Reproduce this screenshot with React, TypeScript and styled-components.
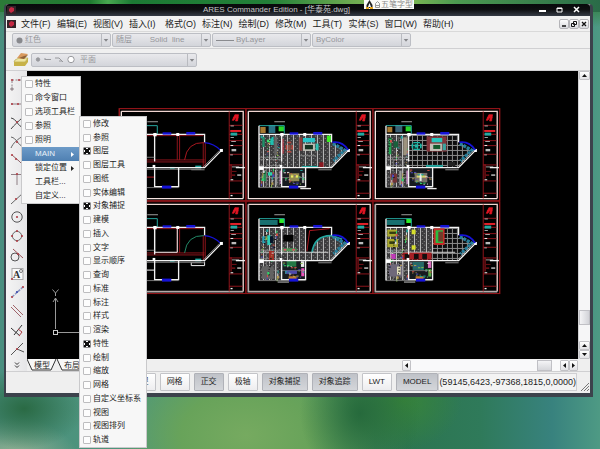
import React from "react";
import styled, { createGlobalStyle, css } from "styled-components";

const GlobalStyle = createGlobalStyle`
  * { box-sizing: border-box; }
  body {
    margin: 0;
    font-family: "Liberation Sans", "Noto Sans CJK SC", sans-serif;
    font-size: 9px;
    line-height: 12px;
    color: #1c1c1c;
  }
  button, select, input { font: inherit; color: inherit; margin: 0; }
`;

const Desktop = styled.main`
  position: relative;
  display: flex;
  min-height: 100vh;
  padding: 4px 7px 52px 4px;
  overflow: hidden;
  border-bottom: 1px solid #77807a;
  background:
    radial-gradient(ellipse 60px 40px at 4% 91%, #2a6a44 0%, transparent 100%),
    radial-gradient(ellipse 70px 50px at 2% 104%, #a3b896 0%, transparent 100%),
    radial-gradient(ellipse 60px 70px at 60% 92%, #266a3c 0%, transparent 100%),
    radial-gradient(ellipse 60px 50px at 67% 89%, #38853a 0%, transparent 100%),
    radial-gradient(ellipse 130px 90px at 41% 97%, #76aa60 0%, #68a35a 50%, transparent 100%),
    linear-gradient(180deg, #2f7a38 0%, transparent 6%),
    linear-gradient(90deg, #4a8f80 0%, #4f977a 25%, #5a9f60 50%, #2c7550 68%, #2f7a5a 80%, #38827e 92%, #4e9a84 100%);
`;

const TopGlow = styled.div`
  position: absolute;
  inset: 0 0 auto 0;
  height: 12px;
  background: linear-gradient(90deg, #2c7a38 0%, #1f7a30 15%, #48a850 18%, #1c7a34 22%, #238038 45%, #6aa850 58%, #8abf55 66%, #4c9a50 76%, #2a6b48 100%);
`;

const Window = styled.section`
  position: relative;
  flex: 1;
  min-width: 0;
  display: flex;
  flex-direction: column;
  border: solid #3c424c;
  border-width: 0 3px 4px 2px;
  border-radius: 4px 4px 0 0;
  background: #efefef;
`;

const TitleBar = styled.header`
  display: grid;
  grid-template-columns: 60px 1fr 60px;
  align-items: center;
  height: 12px;
  padding-left: 1px;
  border-radius: 3px 3px 0 0;
  background: linear-gradient(#08090b 0%, #0d0e10 45%, #353b45 100%);
`;

const Title = styled.h1`
  margin: 0;
  padding-right: 44px;
  font-size: 8px;
  font-weight: normal;
  line-height: 12px;
  text-align: center;
  white-space: nowrap;
  color: #c6c8cb;
`;

const WindowButtons = styled.div`
  display: flex;
  justify-content: flex-end;
  gap: 6px;
  padding-right: 8px;
`;

const CaptionButton = styled.button`
  display: flex;
  width: 11px;
  height: 10px;
  padding: 1px;
  border: 0;
  background: none;
  color: #fff;
`;

const MenuBar = styled.nav`
  display: flex;
  align-items: center;
  height: 16px;
  padding: 0 1px 0 1px;
  border-bottom: 1px solid #d9d9d9;
  background: #f1f1f1;
`;

const MenuList = styled.div`
  display: flex;
  gap: 6px;
  flex: 1;
  padding-left: 5px;
`;

const MenuButton = styled.button`
  padding: 0;
  border: 0;
  background: none;
  font-size: 9px;
  line-height: 14px;
  min-width: 30px;
  text-align: left;
  white-space: nowrap;
`;

const MdiButtons = styled.div`
  display: flex;
`;

const MdiButton = styled.button`
  display: flex;
  width: 10px;
  height: 10px;
  padding: 1px;
  border: 1px solid #b4b4b8;
  border-radius: 2px;
  background: linear-gradient(#fdfdfd, #d9dade);
`;

const Toolbar = styled.div<{ $tall?: boolean }>`
  display: flex;
  align-items: center;
  gap: 1px;
  height: ${(p) => (p.$tall ? 22 : 17)}px;
  padding-left: 6px;
  border-bottom: 1px solid #d0d0d2;
  background: #f0f0f0;
`;

const Combo = styled.label<{ $wide?: boolean }>`
  position: relative;
  display: flex;
  align-items: center;
  flex: 0 1 ${(p) => (p.$wide ? 166 : 99)}px;
  height: 14px;
  padding-left: 3px;
  gap: 2px;
  border: 1px solid #bcbec4;
  border-radius: 2px;
  background: linear-gradient(#e9e9ec, #d3d5da);
  color: #96979b;
`;

const ComboSelect = styled.select`
  appearance: none;
  flex: 1;
  min-width: 0;
  height: 12px;
  padding: 0;
  border: 0;
  background: none;
  font-size: 8px;
  line-height: 12px;
  color: #96979b;
`;

const ComboArrow = styled.svg`
  align-self: stretch;
  flex: none;
  width: 9px;
  height: 12px;
  border-left: 1px solid #b9bbc0;
  pointer-events: none;
`;

const Workspace = styled.div`
  flex: 1;
  min-height: 0;
  display: flex;
`;

const ToolPalette = styled.aside`
  display: flex;
  flex-direction: column;
  justify-content: space-between;
  align-items: center;
  width: 21px;
  padding: 7px 0 0 0;
  background: linear-gradient(90deg, #f4f4f4, #e6e6e8);
`;

const ToolButton = styled.button`
  display: flex;
  padding: 0;
  border: 0;
  background: none;
`;

const DrawingColumn = styled.div`
  flex: 1;
  min-width: 0;
  display: flex;
  flex-direction: column;
`;

const DrawingRow = styled.div`
  flex: 1;
  min-height: 0;
  display: flex;
`;

const Canvas = styled.div`
  flex: 1;
  min-width: 0;
  overflow: hidden;
  background: #000;
`;

const CanvasDrawing = styled.svg`
  display: block;
  width: 100%;
  height: 100%;
`;

const ScrollV = styled.div`
  display: flex;
  flex-direction: column;
  width: 12px;
  background: #f6f6f7;
  border-left: 1px solid #d2d2d4;
`;

const ScrollButton = styled.button`
  display: flex;
  align-items: center;
  justify-content: center;
  flex: none;
  width: 9px;
  height: 11px;
  padding: 0;
  border: 1px solid #c2c2c6;
  border-radius: 1px;
  background: linear-gradient(#fff, #e2e2e5);
  ${ScrollV} & { width: 11px; height: 9px; }
`;

const ThumbV = styled.div`
  height: 15px;
  margin: auto 0 16px;
  border: 1px solid #c0c0c5;
  background: linear-gradient(90deg, #f4f4f6, #d2d3d8);
`;

const TabRow = styled.div`
  display: flex;
  align-items: center;
  height: 12px;
  padding-right: 12px;
  background: #efefef;
`;

const SheetTab = styled.button`
  position: relative;
  width: 30px;
  height: 12px;
  padding: 0;
  border: 0;
  background: none;
  font-size: 8px;
  line-height: 11px;
`;

const TabShape = styled.svg`
  position: absolute;
  inset: 0;
  width: 100%;
  height: 100%;
  z-index: 0;
`;

const TabLabel = styled.span`
  position: relative;
`;

const ScrollH = styled.div`
  display: flex;
  width: 176px;
  margin-left: auto;
  background: #f9f9fa;
`;

const ThumbH = styled.div`
  width: 15px;
  margin: 0 8px 0 auto;
  border: 1px solid #c0c0c5;
  background: linear-gradient(#f4f4f6, #d6d7db);
`;

const StatusBar = styled.footer`
  display: flex;
  justify-content: flex-end;
  align-items: center;
  gap: 4px;
  height: 22px;
  padding: 0 1px 2px 0;
  border-top: 1px solid #cfcfd1;
  background: #efefef;
`;

const StatusButton = styled.button<{ $on?: boolean }>`
  height: 18px;
  padding: 0 6px;
  border: 1px solid ${(p) => (p.$on ? "#b0b2b8" : "#c3c4c8")};
  border-radius: 1px;
  background: ${(p) =>
    p.$on ? "linear-gradient(#bfc2c8, #d4d6da)" : "linear-gradient(#ffffff, #ededef)"};
  font-size: 8px;
  line-height: 14px;
  white-space: nowrap;
`;

const Coordinates = styled.output`
  height: 18px;
  margin-left: -4px;
  border: 1px solid #cfcfd2;
  background: #f3f3f3;
  font-size: 9px;
  line-height: 16px;
  white-space: nowrap;
`;

const Grip = styled.svg`
  align-self: flex-end;
  width: 8px;
  height: 8px;
`;

const PopupMenu = styled.div`
  position: absolute;
  top: 76px;
  left: 21px;
  width: 60px;
  display: flex;
  flex-direction: column;
  border: 1px solid #c9c9cb;
  background: #f7f7f7;
`;

const SubMenu = styled(PopupMenu)`
  top: 116px;
  left: 79px;
  width: 68px;
  max-height: calc(100vh - 117px);
`;

const rowStyle = css`
  display: flex;
  align-items: center;
  flex: 0 1 14px;
  min-height: 0;
  gap: 2px;
  padding: 0 2px 0 3px;
  font-size: 8px;
  line-height: 12px;
  white-space: nowrap;
`;

const CheckRow = styled.label`
  ${rowStyle}
  height: 14px;
`;

const ItemRow = styled.button<{ $active?: boolean }>`
  ${rowStyle}
  height: 14px;
  justify-content: space-between;
  padding: 0 5px 0 13px;
  border: 0;
  background: ${(p) => (p.$active ? "linear-gradient(#6d9bc8, #4f80b2)" : "none")};
  color: ${(p) => (p.$active ? "#e8f0f8" : "#1c1c1c")};
`;

const Check = styled.input`
  appearance: none;
  flex: none;
  width: 8px;
  height: 8px;
  border: 1px solid #bdbdbf;
  border-radius: 1px;
  background: #fdfdfd;
  &:checked {
    border-color: #8c8c8e;
    background:
      linear-gradient(45deg, transparent 36%, #111 36%, #111 64%, transparent 64%),
      linear-gradient(-45deg, transparent 36%, #111 36%, #111 64%, transparent 64%),
      #fdfdfd;
  }
`;

const InputMethod = styled.div`
  position: absolute;
  top: 0;
  left: 61%;
  margin-left: -2px;
  display: flex;
  align-items: center;
  gap: 1px;
  height: 9px;
  padding: 0 1px;
  background: #fafaf8;
  font-size: 8px;
  line-height: 9px;
  color: #8c8c8c;
  white-space: nowrap;
`;

type Kids = { children: React.ReactNode };

const Glyph = ({ children }: Kids) => (
  <svg width="16" height="14" viewBox="0 0 16 14" fill="none" stroke="#8d7f84" strokeWidth="1">
    {children}
  </svg>
);

const Dot = ({ x, y, c = "#b04048" }: { x: number; y: number; c?: string }) => (
  <circle cx={x} cy={y} r="1.1" fill={c} stroke="none" />
);

const toolIcons: { name: string; art: React.ReactNode }[] = [
  { name: "端点", art: <><path d="M3 2h12M3 3v9" strokeDasharray="2 1.5" /><Dot x={3} y={2} /><Dot x={10} y={2} /><circle cx="3" cy="11" r="1.2" /></> },
  { name: "中点", art: <><path d="M2 7h14" /><Dot x={3} y={7} /><Dot x={9} y={7} /></> },
  { name: "交点", art: <><path d="M2 2c6 1 6 8 13 10M14 1C10 5 5 9 2 13" stroke="#444" /><Dot x={8} y={6} /></> },
  { name: "视交点", art: <><path d="M2 2c6 1 6 8 13 10M14 1C9 4 4 8 2 13" stroke="#666" /><Dot x={8} y={7} /><Dot x={13} y={4} /></> },
  { name: "延伸", art: <><path d="M3 2l7 6 5 5" stroke="#8f6468" /><Dot x={3} y={2} /><Dot x={7} y={6} /></> },
  { name: "垂足", art: <><path d="M2 2.5h12M8 2v11" /><Dot x={8} y={2} /></> },
  { name: "最近点", art: <><path d="M2 13L14 2" stroke="#666" /><Dot x={7} y={8} /></> },
  { name: "圆心", art: <><circle cx="8" cy="7" r="5.2" stroke="#555" /><Dot x={8} y={7} /></> },
  { name: "象限点", art: <><circle cx="8" cy="7" r="4.6" stroke="#666" /><Dot x={8} y={2} /><Dot x={8} y={12} /><Dot x={3} y={7} /><Dot x={13} y={7} /></> },
  { name: "切点", art: <><circle cx="6" cy="9" r="4" stroke="#555" /><path d="M4 1l10 9" stroke="#9a5258" /><Dot x={9} y={6} /></> },
  { name: "插入点", art: <><rect x="3" y="1.5" width="11" height="11" fill="#fafafa" stroke="#aaa" /><text x="4" y="11" fontFamily="Liberation Serif" fontSize="10" fontWeight="bold" fill="#333" stroke="none">A</text><circle cx="12" cy="4" r="1.5" stroke="#777" /><Dot x={3} y={12} /></> },
  { name: "节点", art: <><path d="M3 12L14 2" stroke="#8a94c0" strokeDasharray="3 1" strokeWidth="1.5" /><Dot x={3} y={12} /><Dot x={8} y={7} c="#3344aa" /><Dot x={14} y={2} /></> },
  { name: "平行", art: <><path d="M4 1l10 10M2 3l10 10" stroke="#a0646a" /></> },
  { name: "垂直", art: <><path d="M2 5l9 8M5 12l8-10" stroke="#333" /><path d="M9 6l4 3-3 4" stroke="#b04048" /></> },
  { name: "无", art: <><path d="M2 13L14 1M8 7l7 3" stroke="#555" /><Dot x={8} y={7} /></> },
];

type Box = [number, number, number, number, string];
const Boxes = ({ items }: { items: Box[] }) => (
  <>{items.map(([x, y, w, h, c], i) => <rect key={i} x={x} y={y} width={w} height={h} fill={c} />)}</>
);

const RED = "#a81820";
const BLUE = "#1512d8";
const TEAL = "#25a7a0";
const WHITE = "#f2f2f2";

const TitleBlock = ({ row }: { row: number }) => (
  <g>
    <rect x="3" y="11" width="381" height="276" fill="none" stroke="#8e1418" strokeWidth="3" />
    <path d="M10 19H376V281" fill="none" stroke="#f0d4d0" strokeWidth="4" />
    <path d="M10 19V281H376" fill="none" stroke={row ? "#b4aaaa" : "#f6e4e0"} strokeWidth={row ? 5 : 4} />
    <path d="M334 19V281M334 61H374M334 88H374M334 107H374M334 122H374M334 148H374M334 180H374M334 228H374M334 265H374" stroke={RED} strokeWidth="2.5" fill="none" />
    <path d="M343 46l8-17h11l-3 19h-6l3-14-8 12zM345 38h17" fill="#e01522" stroke="#e01522" strokeWidth="2" />
    <Boxes items={[[337,75,33,6,"#e02028"],[338,83,20,9,TEAL],[338,62,10,2,WHITE],[338,97,10,2,WHITE],[340,109,14,2,WHITE],[338,120,8,3,WHITE],[341,132,14,7,"#bbb"],[337,149,8,2,WHITE],[338,178,3,43,RED],[342,185,22,2,WHITE],[354,186,27,4,WHITE],[342,198,14,2,RED],[358,208,12,5,"#aaa"],[342,209,10,3,RED],[338,223,8,3,WHITE],[338,270,6,4,WHITE]]} />
  </g>
);

const Shell = ({ detailed }: { detailed: boolean }) => (
  <g fill="none">
    <path d="M42 62H118V88" stroke={TEAL} strokeWidth="3" />
    <path d="M88 50H120" stroke="#777" strokeWidth="4" />
    <path d="M42 62V248M42 88H260V112M42 188H260L310 137M110 88V170M110 188V245H182V188" stroke={WHITE} strokeWidth="4" />
    <path d="M46 157H110M42 248H182M254 188L304 137" stroke="#aaa" strokeWidth="2" />
    <Boxes items={[[134,82,26,7,BLUE],[205,81,27,8,BLUE],[132,242,28,9,BLUE],[106,84,10,10,"#fff"],[175,84,9,9,"#fff"],[42,184,14,11,"#fff"],[306,132,9,9,"#fff"],[104,180,8,9,"#fff"],[220,193,40,3,"#888"]]} />
    {detailed && <path d="M262 112Q292 107 310 135" stroke={BLUE} strokeWidth="5" />}
  </g>
);

const PlainPlan = ({ row }: { row: number }) => (
  <g fill="none">
    <path d="M80 165H260M80 171H260M178 92V165M185 92V165M256 112V186M262 112V186M80 92H256" stroke={RED} strokeWidth="2.5" />
    {row === 1 && <path d="M110 92V163H178V92" stroke={WHITE} strokeWidth="3" />}
    <path d="M200 165Q207 111 258 113" stroke={row ? "#238a68" : RED} strokeWidth="3" />
    <path d="M260 113Q288 115 309 137" stroke={BLUE} strokeWidth="4" />
    <path d="M80 188H250M80 193H250" stroke="#bbb" strokeWidth="2" />
    {row === 1 && <path d="M220 194v9h40v-12" stroke={WHITE} strokeWidth="3" />}
    <Boxes items={[[156,186,14,5,TEAL],[232,182,18,8,TEAL],[80,215,30,3,row ? WHITE : RED]]} />
  </g>
);

const furniture: Box[][] = [
  [[46,66,16,18,"#a77a32"],[101,64,16,15,"#28d628"],[71,60,20,24,"#2b7285"],[52,96,7,30,"#1e9168"],[66,104,14,8,"#3ddf6c"],[76,96,10,24,"#20bfb0"],[88,94,9,57,"#656565"],[55,199,8,30,"#268d55"],[69,202,13,10,"#2bd2ad"],[91,202,6,38,"#929292"],[112,102,4,44,"#c53a48"],[122,120,5,14,"#b3463c"],[139,120,5,14,"#b3463c"],[127,110,12,5,"#b3463c"],[127,138,12,5,"#b3463c"],[129,119,8,16,"#8a5040"],[163,97,9,40,"#8b3b38"],[174,99,36,13,"#28c4c8"],[174,116,36,22,"#bdbdb4"],[180,120,24,13,"#143222"],[212,116,9,20,"#2fbfb0"],[166,150,46,4,"#777"],[246,92,12,19,"#39ef22"],[171,183,47,4,TEAL],[223,172,13,14,"#8b1820"],[132,205,31,24,"#8e8751"],[138,211,7,7,"#e7ed62"],[152,211,7,7,"#e7ed62"],[104,197,5,40,"#bf8bbd"],[171,204,7,30,"#a1a1a1"],[166,249,32,4,"#eee"]],
  [[46,66,15,16,"#a77a32"],[101,64,16,15,"#28d628"],[70,60,21,22,"#3b6074"],[50,99,8,49,"#24a653"],[65,109,14,19,"#195f3c"],[78,96,9,40,"#5a5a5a"],[94,97,13,54,"#9c927e"],[124,111,20,4,"#17b9a6"],[124,131,20,4,"#17b9a6"],[119,116,5,14,"#17b9a6"],[144,116,5,14,"#17b9a6"],[128,118,11,10,"#17b9a6"],[164,94,60,46,"#82353b"],[179,99,32,13,"#28c5bd"],[174,116,36,22,"#c4c0b8"],[184,120,21,12,"#145a2d"],[212,116,10,20,"#3aa5a0"],[162,180,51,6,TEAL],[228,171,22,13,"#222"],[55,206,20,27,"#723336"],[82,197,7,44,"#9a9a9a"],[103,197,5,40,"#bf8bbd"],[128,204,38,28,"#77716a"],[134,212,28,6,"#d5d569"],[143,206,6,22,"#eee"],[166,249,28,4,"#eee"]],
  [[44,66,54,15,"#187070"],[103,62,15,13,"#2ded28"],[52,115,9,21,"#2ca3b8"],[67,112,10,29,"#2bd0bc"],[75,115,10,20,"#061629"],[115,111,31,20,"#000"],[112,151,43,9,"#4e9656"],[116,153,8,5,"#df4d66"],[142,153,8,5,"#df4d66"],[72,158,15,29,"#a22e26"],[125,188,29,18,"#247845"],[120,218,36,10,"#4e4aab"],[131,235,24,10,"#bd7c31"],[168,190,10,17,"#e9e9e9"],[169,211,9,24,"#ed54bc"],[51,205,35,38,"#626262"],[98,250,34,5,"#777"]],
  [[44,66,54,15,"#187070"],[103,62,15,13,"#2ded28"],[46,95,29,21,"#aaa82e"],[46,123,32,25,"#aaa82e"],[52,101,20,7,"#343d11"],[52,130,18,8,"#343d11"],[119,95,12,14,"#d7df2c"],[119,142,12,13,"#d7df2c"],[185,91,33,50,"#c52b28"],[191,97,22,38,"#28bd41"],[199,101,14,30,"#723b2c"],[91,164,88,21,"#a62025"],[98,168,14,15,"#120e0e"],[126,168,14,15,"#120e0e"],[151,168,14,15,"#120e0e"],[56,168,15,15,"#bf39b8"],[50,199,41,37,"#6f697a"],[75,206,11,24,"#e1dfbb"],[122,192,34,24,"#246968"],[131,235,24,10,"#bd7c31"],[168,190,10,20,"#d96bbb"],[169,214,9,22,"#58aa45"],[96,250,34,5,"#777"]],
];

const specks = Array.from({ length: 56 }, (_, i) => i);
const speckColors = ["#21a5a0", "#cf5048", "#87b84a", "#d9d9d9", "#5049b9", "#30d46a", "#b59b50"];

const DetailedPlan = ({ kind }: { kind: number }) => {
  const grid = kind === 1 || kind === 3;
  return (
    <g>
      <path d="M42 88H110V246H42Z" fill="url(#planks)" />
      <path d="M110 88H260V112L306 137L260 188H110Z" fill={grid ? "url(#tiles)" : "url(#planks)"} />
      {kind === 3 && <path d="M110 88H182V165H110Z" fill="url(#planks)" />}
      {kind === 2 && (
        <>
          <path d="M182 90H258V113Q209 116 202 163H182Z" fill="#000" />
          <path d="M186 160L194 98L254 92" fill="none" stroke={RED} strokeWidth="3" />
          <path d="M201 165Q208 112 260 113L292 124" fill="none" stroke={TEAL} strokeWidth="5" />
        </>
      )}
      <path d="M110 191H180V246H110Z" fill="#171b20" />
      <path d="M264 116L300 136L266 168" fill="none" stroke="#267e9a" strokeWidth="10" strokeDasharray="9 3" />
      {(kind === 2 || kind === 3) && <path d="M46 163H250M182 92V163" stroke="#d1d1d1" strokeWidth="3" />}
      <path d="M46 164H107M46 182H107M64 164V245M94 164V245M46 218H182" stroke="#999" strokeWidth="2" />
      <Boxes items={furniture[kind]} />
      {specks.map((i) => {
        const x = 47 + ((i * 23 + kind * 7) % 61);
        const y = 92 + ((i * 37 + kind * 13) % 152);
        return <rect key={i} x={x} y={y} width={i % 3 ? 3 : 6} height={i % 4 ? 3 : 8} fill={i % 2 ? "#101010" : speckColors[(i / 2 + kind) % 7]} />;
      })}
      {specks.slice(0, 24).map((i) => (
        <rect key={i} x={114 + ((i * 17) % 62)} y={194 + ((i * 29) % 45)} width={i % 2 ? 3 : 7} height="3" fill={speckColors[(i * 3 + kind) % 7]} />
      ))}
      <Shell detailed />
    </g>
  );
};

const Sheet = ({ col, row }: { col: number; row: number }) => (
  <g transform={`translate(${118 + col * 127} ${105 + row * 93}) scale(0.333)`}>
    <TitleBlock row={row} />
    {col === 0 ? <><PlainPlan row={row} /><Shell detailed={false} /></> : <DetailedPlan kind={row * 2 + col - 1} />}
  </g>
);

const sheets = [0, 1].flatMap((row) => [0, 1, 2].map((col) => ({ row, col })));

const Drawing = () => (
  <CanvasDrawing viewBox="27 71 551 288" preserveAspectRatio="xMinYMin meet" role="img" aria-label="华泰苑.dwg">
    <defs>
      <pattern id="planks" width="18" height="24" patternUnits="userSpaceOnUse">
        <rect width="18" height="24" fill="#3c3b3d" />
        <path d="M1.500 0V24" stroke="#c0c0c0" strokeWidth="3" />
        <path d="M7 3v3M13 9v3M8 15v3M14 20v3" stroke="#8a8a8a" strokeWidth="3" />
      </pattern>
      <pattern id="tiles" width="15" height="15" patternUnits="userSpaceOnUse">
        <rect width="15" height="15" fill="#0c0c0d" />
        <path d="M1.500 0V15M0 1.500H15" stroke="#8a8a8a" strokeWidth="3" />
      </pattern>
    </defs>
    <rect x="119.5" y="108.5" width="380" height="185" fill="none" stroke="#9a161b" />
    {sheets.map((s) => <Sheet key={`${s.row}${s.col}`} {...s} />)}
    <g fill="none" stroke="#999" strokeWidth="1">
      <path d="M55.500 329V298M53 302l2.500-4 2.500 4M58 332.500H96M52.500 289.500l3 3.500 3-3.500M55.500 293v3" />
      <rect x="53.500" y="330.500" width="4" height="4" stroke="#ccc" />
    </g>
  </CanvasDrawing>
);

const Arrow = ({ d }: { d: string }) => (
  <svg width="5" height="5" viewBox="0 0 5 5"><path d={d} fill="#111" /></svg>
);
const LEFT = "M4 0v5L1 2.500z";
const RIGHT = "M1 0v5l3-2.500z";
const UP = "M0 4h5L2.500 1z";
const DOWN = "M0 1h5L2.500 4z";

const AppMark = () => (
  <svg width="9" height="8" viewBox="0 0 9 8" aria-hidden="true">
    <rect width="9" height="8" fill="#352328" />
    <path d="M2 3l2-2 3 1v3L4 7 2 5z" fill="#c52843" />
  </svg>
);

const menus = ["文件(F)", "编辑(E)", "视图(V)", "插入(I)", "格式(O)", "标注(N)", "绘制(D)", "修改(M)", "工具(T)", "实体(S)", "窗口(W)", "帮助(H)"];
const panels = ["特性", "命令窗口", "选项工具栏", "参照", "照明"];
const toolbars = ["修改", "参照", "图层", "图层工具", "图纸", "实体编辑", "对象捕捉", "建模", "插入", "文字", "显示顺序", "查询", "标准", "标注", "样式", "渲染", "特性", "绘制", "缩放", "网格", "自定义坐标系", "视图", "视图排列", "轨道"];
const shown = new Set(["图层", "对象捕捉", "特性"]);
const modes = [
  { label: "捕捉" }, { label: "网格" }, { label: "正交", on: true }, { label: "极轴" },
  { label: "对象捕捉", on: true }, { label: "对象追踪", on: true }, { label: "LWT" }, { label: "MODEL", on: true },
];

const Dropdown = ({ name, value, art, wide }: { name: string; value: string; art?: React.ReactNode; wide?: boolean }) => (
  <Combo $wide={wide}>
    {art}
    <ComboSelect aria-label={name}><option>{value}</option></ComboSelect>
    <ComboArrow viewBox="0 0 9 12"><path d="M2 5h5L4.500 8z" fill="#85868a" /></ComboArrow>
  </Combo>
);

export default function App() {
  return (
    <>
      <GlobalStyle />
      <Desktop>
        <TopGlow />
        <Window>
          <TitleBar>
            <AppMark />
            <Title>ARES Commander Edition - [华泰苑.dwg]</Title>
            <WindowButtons>
              <CaptionButton aria-label="最小化"><svg width="9" height="8"><path d="M1 5h7" stroke="currentColor" strokeWidth="2" /></svg></CaptionButton>
              <CaptionButton aria-label="最大化"><svg width="9" height="8"><path d="M2 2h5v4H2zM2 2.500h5" stroke="currentColor" fill="none" /></svg></CaptionButton>
              <CaptionButton aria-label="关闭"><svg width="9" height="8"><path d="M2 1l5 5M7 1L2 6" stroke="currentColor" strokeWidth="1.500" /></svg></CaptionButton>
            </WindowButtons>
          </TitleBar>
          <MenuBar>
            <AppMark />
            <MenuList>{menus.map((m) => <MenuButton key={m}>{m}</MenuButton>)}</MenuList>
            <MdiButtons>
              <MdiButton aria-label="最小化图纸"><svg width="6" height="6"><path d="M1 5h4" stroke="#111" strokeWidth="1.500" /></svg></MdiButton>
              <MdiButton aria-label="还原图纸"><svg width="6" height="6"><path d="M2.500 .5h3v3h-3zM.5 2.500h3v3h-3z" stroke="#111" fill="none" /></svg></MdiButton>
              <MdiButton aria-label="关闭图纸"><svg width="6" height="6"><path d="M1 1l4 4M5 1L1 5" stroke="#111" strokeWidth="1.300" /></svg></MdiButton>
            </MdiButtons>
          </MenuBar>
          <Toolbar>
            <Dropdown name="颜色" value="红色" art={<svg width="7" height="7"><circle cx="3.500" cy="3.500" r="3" fill="#88898d" /></svg>} />
            <Dropdown name="线型" value="随层&nbsp;&nbsp;&nbsp;&nbsp;&nbsp;&nbsp;&nbsp;&nbsp;Solid&nbsp;&nbsp;line" />
            <Dropdown name="线宽" value="ByLayer" art={<svg width="18" height="6"><path d="M0 3.500h18" stroke="#8a8b8f" /></svg>} />
            <Dropdown name="打印样式" value="ByColor" />
          </Toolbar>
          <Toolbar $tall>
            <svg width="18" height="15" viewBox="0 0 18 15" aria-hidden="true">
              <path d="M3 8l4-2h9l-3 4H2z" fill="#eee5a0" stroke="#b7a94e" strokeWidth=".7" />
              <path d="M2 10h11l3-4v4l-3 4H2z" fill="#c7b248" />
              <path d="M5 6l4-5 7 1-4 5z" fill="#d99a5e" /><path d="M7 6l5-2 4-1-4 4z" fill="#8e6238" />
            </svg>
            <Dropdown
              wide
              name="图层"
              value="平面"
              art={
                <svg width="43" height="9" viewBox="0 0 43 9" fill="none" stroke="#98999d">
                  <circle cx="3" cy="4.500" r="1.700" fill="#98999d" /><path d="M10 5v-2M10 4.500h6M20 3h4l4 4M24 6h3" />
                  <circle cx="36" cy="4.500" r="3.200" fill="#fff" />
                </svg>
              }
            />
          </Toolbar>
          <Workspace>
            <ToolPalette>
              {toolIcons.map((t) => <ToolButton key={t.name} aria-label={t.name}><Glyph>{t.art}</Glyph></ToolButton>)}
              <ToolButton aria-label="更多"><svg width="8" height="10" fill="none" stroke="#333"><path d="M2 1.500l2 2 2-2M2 4.500l2 2 2-2" /></svg></ToolButton>
            </ToolPalette>
            <DrawingColumn>
              <DrawingRow>
                <Canvas><Drawing /></Canvas>
                <ScrollV>
                  <ScrollButton aria-label="上"><Arrow d={UP} /></ScrollButton>
                  <ThumbV />
                  <ScrollButton aria-label="上移"><Arrow d={UP} /></ScrollButton>
                  <ScrollButton aria-label="下"><Arrow d={DOWN} /></ScrollButton>
                </ScrollV>
              </DrawingRow>
              <TabRow>
                {["模型", "布局"].map((t) => (
                  <SheetTab key={t}>
                    <TabShape viewBox="0 0 30 12"><path d="M0 0l5 11h19l5-11" fill="#f8f8f8" stroke="#333" /></TabShape>
                    <TabLabel>{t}</TabLabel>
                  </SheetTab>
                ))}
                <ScrollH>
                  <ScrollButton aria-label="左"><Arrow d={LEFT} /></ScrollButton>
                  <ThumbH />
                  <ScrollButton aria-label="左移"><Arrow d={LEFT} /></ScrollButton>
                  <ScrollButton aria-label="右"><Arrow d={RIGHT} /></ScrollButton>
                </ScrollH>
              </TabRow>
            </DrawingColumn>
          </Workspace>
          <StatusBar>
            {modes.map((m) => <StatusButton key={m.label} $on={m.on} aria-pressed={!!m.on}>{m.label}</StatusButton>)}
            <Coordinates>(59145,6423,-97368,1815,0,0000)</Coordinates>
            <Grip viewBox="0 0 8 8"><path d="M0 8l8-8M3 8l5-5M6 8l2-2" stroke="#777" /></Grip>
          </StatusBar>
        </Window>
        <InputMethod>
          <svg width="9" height="9" viewBox="0 0 9 9"><path d="M4.500 0l3 5v3h-6V5z" fill="#222" /><path d="M4.500 3l1.500 4H3z" fill="#fff" /><path d="M1 8h3M5 8h3" stroke="#e5a520" strokeWidth="2" /></svg>
          <svg width="5" height="7" fill="none" stroke="#999"><path d="M.5 2.500l2-2 2 2v4h-4zM.5 4.500h4" /></svg>
          五笔字型
        </InputMethod>
        <PopupMenu>
          {panels.map((p) => <CheckRow key={p}><Check type="checkbox" />{p}</CheckRow>)}
          <ItemRow $active>MAIN<svg width="4" height="5"><path d="M0 0v5l3-2.500z" fill="#fff" /></svg></ItemRow>
          <ItemRow>锁定位置<svg width="4" height="5"><path d="M0 0v5l3-2.500z" fill="#222" /></svg></ItemRow>
          <ItemRow>工具栏...</ItemRow>
          <ItemRow>自定义...</ItemRow>
        </PopupMenu>
        <SubMenu>
          {toolbars.map((t) => <CheckRow key={t}><Check type="checkbox" defaultChecked={shown.has(t)} />{t}</CheckRow>)}
        </SubMenu>
      </Desktop>
    </>
  );
}
